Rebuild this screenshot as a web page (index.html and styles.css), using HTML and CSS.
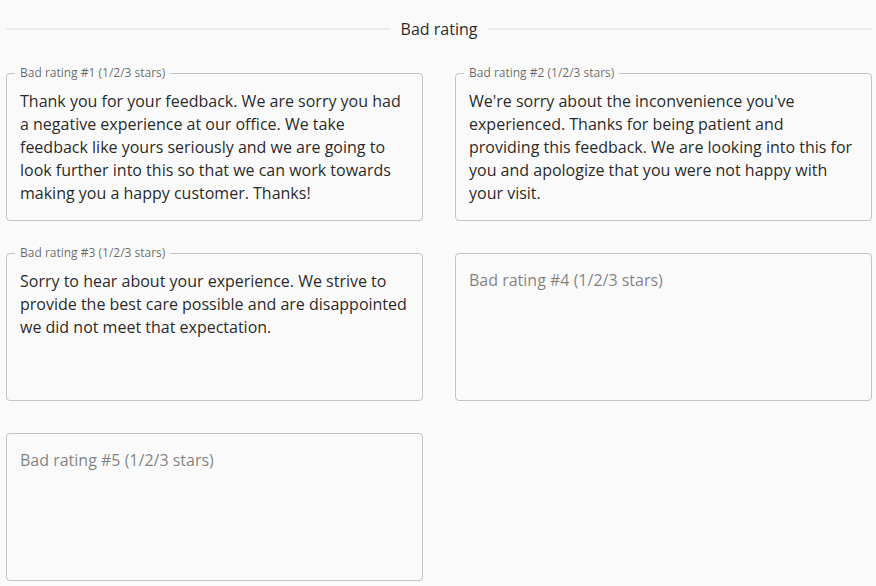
FILE: index.html
```html
<!DOCTYPE html>
<html>
<head>
<meta charset="utf-8">
<link rel="stylesheet" href="styles.css">
</head>
<body>
<div class="page">
  <div class="divider"><span class="divider-text">Bad rating</span></div>
  <div class="grid">
    <div class="field">
      <span class="label">Bad rating #1 (1/2/3 stars)</span>
      <div class="input">Thank you for your feedback. We are sorry you had a negative experience at our office. We take feedback like yours seriously and we are going to look further into this so that we can work towards making you a happy customer. Thanks!</div>
    </div>
    <div class="field">
      <span class="label">Bad rating #2 (1/2/3 stars)</span>
      <div class="input">We're sorry about the inconvenience you've experienced. Thanks for being patient and providing this feedback. We are looking into this for you and apologize that you were not happy with your visit.</div>
    </div>
    <div class="field">
      <span class="label">Bad rating #3 (1/2/3 stars)</span>
      <div class="input">Sorry to hear about your experience. We strive to provide the best care possible and are disappointed we did not meet that expectation.</div>
    </div>
    <div class="field empty">
      <div class="input placeholder">Bad rating #4 (1/2/3 stars)</div>
    </div>
    <div class="field empty">
      <div class="input placeholder">Bad rating #5 (1/2/3 stars)</div>
    </div>
  </div>
</div>
</body>
</html>
```
FILE: styles.css
```css
html, body {
  margin: 0;
  background: #fafafa;
}
body {
  font-family: "Open Sans", "Liberation Sans", sans-serif;
  color: rgba(0, 0, 0, 0.87);
}
.page {
  padding: 17px 4px 0 6px;
}
.divider {
  display: flex;
  align-items: center;
  margin-bottom: 32px;
}
.divider::before,
.divider::after {
  content: "";
  flex: 1;
  border-top: 2px solid #ececec;
}
.divider-text {
  font-size: 16px;
  line-height: 24px;
  padding: 0 11px;
}
.grid {
  display: grid;
  grid-template-columns: 1fr 1fr;
  gap: 32px;
}
.field {
  position: relative;
  border: 1px solid #c4c4c4;
  border-radius: 4px;
  height: 146px;
}
.label {
  position: absolute;
  left: 8px;
  top: -10px;
  padding: 0 5px;
  font-size: 12px;
  line-height: 17px;
  color: rgba(0, 0, 0, 0.6);
  background: #fafafa;
}
.input {
  padding: 15.5px 13px;
  font-size: 16px;
  line-height: 23px;
}
.input.placeholder {
  padding-top: 14.5px;
  color: rgba(0, 0, 0, 0.5);
}
```
